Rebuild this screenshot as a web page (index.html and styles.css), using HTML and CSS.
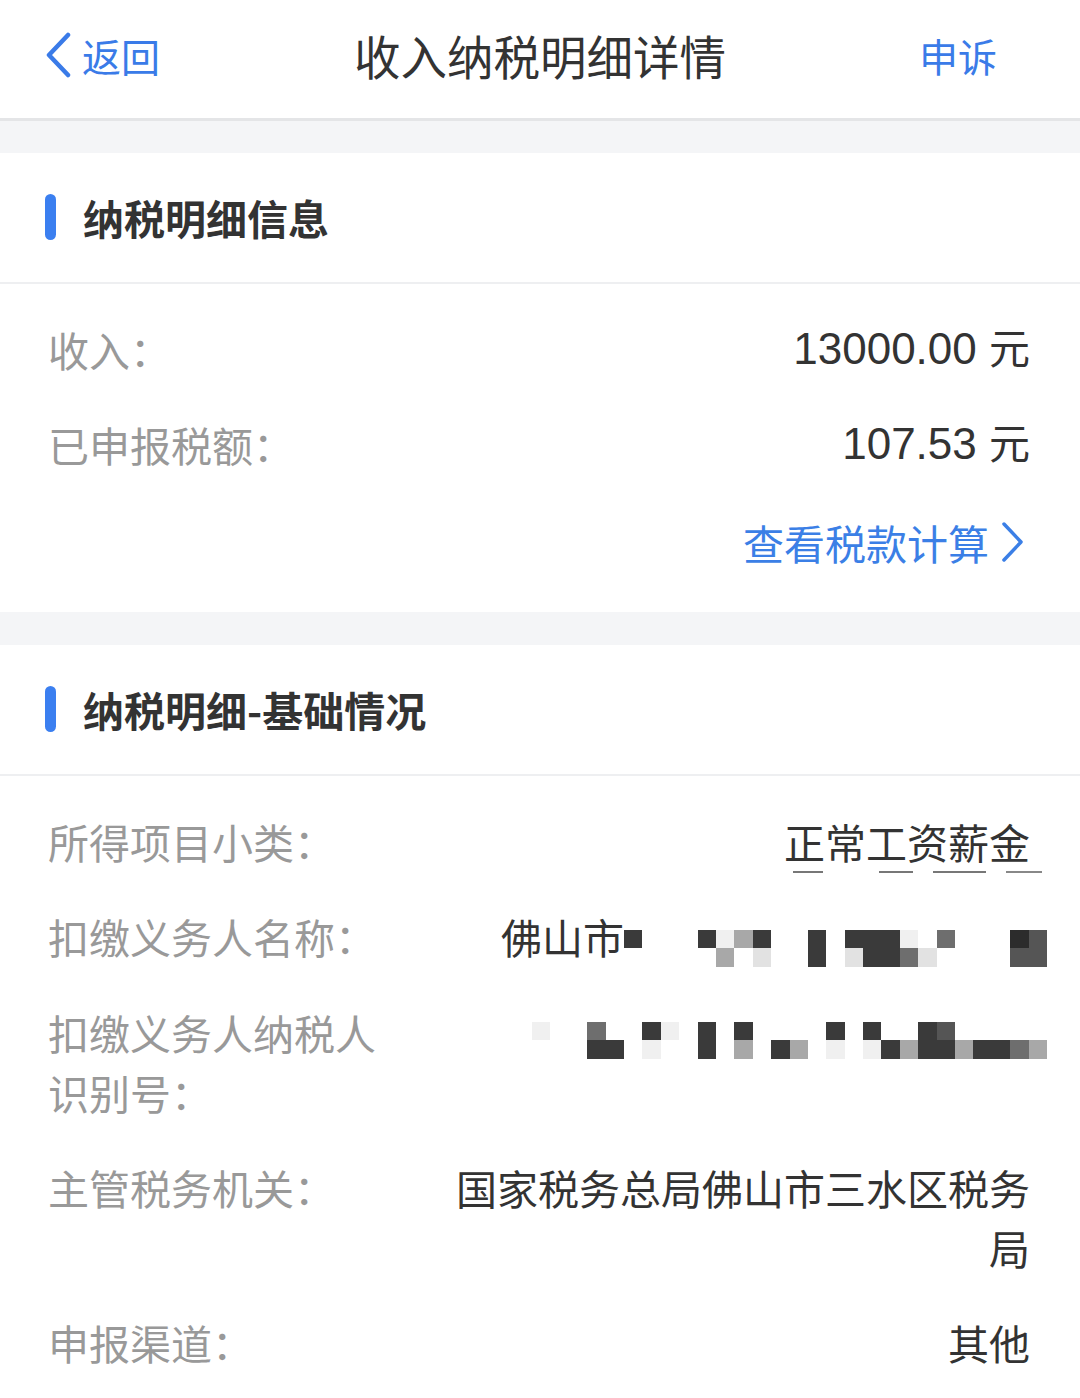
FILE: index.html
```html
<!DOCTYPE html>
<html lang="zh-CN">
<head>
    <meta charset="UTF-8">
    <meta name="viewport" content="width=device-width, initial-scale=1.0">
    <title>收入纳税明细详情</title>
    <link rel="stylesheet" href="styles.css">
</head>
<body>

    <header class="nav">
        <a class="nav-back" href="#">
            <svg class="nav-back-icon" width="28" height="46" viewBox="0 0 28 46"><polyline points="24,3 5,23 24,43" fill="none" stroke="currentColor" stroke-width="4.5" stroke-linecap="round" stroke-linejoin="round"/></svg>
            <span>返回</span>
        </a>
        <h1 class="nav-title">收入纳税明细详情</h1>
        <a class="nav-action" href="#">申诉</a>
    </header>

    <!-- 纳税明细信息 -->
    <section class="card">
        <div class="card-head">
            <span class="card-bar"></span>
            <h2>纳税明细信息</h2>
        </div>
        <div class="card-body">
            <div class="row">
                <span class="row-label">收入：</span>
                <span class="row-value num">13000.00 <span class="unit">元</span></span>
            </div>
            <div class="row">
                <span class="row-label">已申报税额：</span>
                <span class="row-value num">107.53 <span class="unit">元</span></span>
            </div>
            <a class="calc-link" href="#">
                <span>查看税款计算</span>
                <svg width="26" height="42" viewBox="0 0 26 42"><polyline points="5,3 22,21 5,39" fill="none" stroke="currentColor" stroke-width="3.5" stroke-linecap="round" stroke-linejoin="round"/></svg>
            </a>
        </div>
    </section>

    <!-- 纳税明细-基础情况 -->
    <section class="card">
        <div class="card-head">
            <span class="card-bar"></span>
            <h2>纳税明细-基础情况</h2>
        </div>
        <div class="card-body">
            <div class="row">
                <span class="row-label">所得项目小类：</span>
                <div class="row-value">
                    <div>正常工资薪金</div>
                    <div class="dash-line"></div>
                </div>
            </div>
            <div class="row">
                <span class="row-label">扣缴义务人名称：</span>
                <div class="row-value masked">
                    <span>佛山市</span>
                    <div class="mosaic mosaic-name" data-rows="6...6136..6.6661.4...75|.....3.2..6.26642....55"></div>
                </div>
            </div>
            <div class="row">
                <span class="row-label">扣缴义务人纳税人识别号：</span>
                <div class="row-value masked">
                    <div class="mosaic mosaic-id" data-rows="1..4..61.6.6....6.6..65.....|...66.1..6.3.63.1.1636636643"></div>
                </div>
            </div>
            <div class="row">
                <span class="row-label">主管税务机关：</span>
                <span class="row-value">国家税务总局佛山市三水区税务局</span>
            </div>
            <div class="row">
                <span class="row-label">申报渠道：</span>
                <span class="row-value">其他</span>
            </div>
        </div>
    </section>

    <script>
        // 打码区域：每个字符是一个马赛克格子，"." 为空白
        document.querySelectorAll('.mosaic').forEach(box => {
            const rows = box.dataset.rows.split('|');
            box.style.gridTemplateColumns = `repeat(${rows[0].length}, 18.4px)`;
            rows.forEach(row => {
                for (const ch of row) {
                    const cell = document.createElement('i');
                    if (ch !== '.') cell.className = 's' + ch;
                    box.appendChild(cell);
                }
            });
        });
    </script>
</body>
</html>
```

FILE: styles.css
```css
* { box-sizing: border-box; }
body { margin: 0; background-color: #f4f5f7; font-family: "Noto Sans CJK SC", sans-serif; color: #333; }
a { text-decoration: none; }

.nav { height: 121px; background: #fff; border-bottom: 3px solid #e4e5e7; display: grid; grid-template-columns: 1fr auto 1fr; align-items: center; padding: 0 44px 8px; }
.nav-back { display: flex; align-items: center; gap: 10px; color: #3a7be8; font-size: 39px; line-height: 50px; justify-self: start; }
.nav-back-icon { display: block; }
.nav-title { margin: 0; font-size: 46.5px; font-weight: 400; color: #333; line-height: 60px; }
.nav-action { justify-self: end; margin-right: 39px; color: #3a7be8; font-size: 39px; line-height: 50px; }

.card { background: #fff; margin-top: 32px; }
.card + .card { margin-top: 33px; }
.card-head { height: 131px; border-bottom: 2px solid #eeeff1; display: flex; align-items: center; gap: 27px; padding: 0 0 2px 45px; }
.card-bar { width: 11px; height: 46px; border-radius: 6px; background: #3b7ff0; }
.card-head h2 { margin: 0; font-size: 41px; font-weight: 700; color: #333; line-height: 60px; }
.card-body { padding: 17px 50px 20px 48px; }

.row { display: flex; align-items: flex-start; padding: 18px 0 17px; font-size: 41px; line-height: 60px; }
.row-label { flex: 0 0 340px; color: #999; }
.row-value { flex: 1; margin-left: 40px; text-align: right; color: #333; }
.num { height: 60px; font-family: "Liberation Sans", "Noto Sans CJK SC", sans-serif; font-size: 44px; }
.num .unit { font-family: "Noto Sans CJK SC", sans-serif; font-size: 41px; line-height: 1; }

.calc-link { display: flex; justify-content: flex-end; align-items: center; gap: 10px; color: #3b7fe6; font-size: 41px; line-height: 60px; padding: 21px 5px 20px 0; }
.calc-link svg { display: block; }

/* 正常工资薪金 下方的残留线 */
.dash-line { height: 2px; width: 249px; margin: 0 -12px -2px auto; background: linear-gradient(to right, #777 0 30px, transparent 30px 86px, #777 86px 120px, transparent 120px 140px, #777 140px 193px, transparent 193px 213px, #888 213px 249px); }

.masked { display: flex; justify-content: flex-end; align-items: flex-start; }
.mosaic { display: grid; grid-auto-rows: 18.4px; margin-right: -17px; }
.mosaic-name { margin-top: 24px; }
.mosaic-id { margin-top: 20px; }
.mosaic .s1 { background: #f0f0f0; }
.mosaic .s2 { background: #e2e2e2; }
.mosaic .s3 { background: #a8a8a8; }
.mosaic .s4 { background: #6e6e6e; }
.mosaic .s5 { background: #555; }
.mosaic .s6 { background: #3a3a3a; }
.mosaic .s7 { background: #2c2c2c; }
```
